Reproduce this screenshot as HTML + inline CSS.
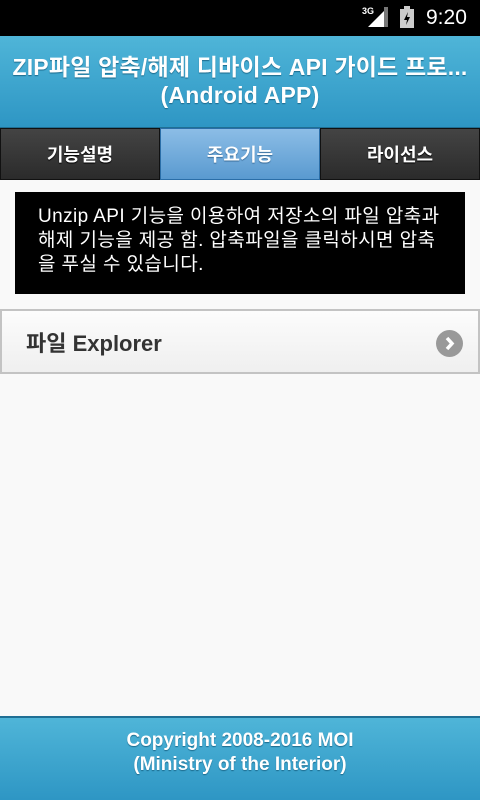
<!DOCTYPE html>
<html><head><meta charset="utf-8"><style>
*{margin:0;padding:0;box-sizing:border-box}
body{width:480px;height:800px;background:#f9f9f9;font-family:"Liberation Sans","Noto Sans CJK KR",sans-serif;position:relative;overflow:hidden}
.sb{height:36px;background:#000;color:#fff;position:relative}
.hd{position:absolute;top:36px;left:0;width:480px;height:92px;background:linear-gradient(#4fb5d8,#2e96c4);color:#fff;text-align:center;font-weight:bold;font-size:23px;line-height:28px;padding-top:17px;text-shadow:0 1px 1px #1c6a8c;border-bottom:1px solid #1f6f94;white-space:nowrap;letter-spacing:0.2px}
.tabs{position:absolute;top:128px;left:0;width:480px;height:52px;display:flex;background:#222}
.tab{flex:1;display:flex;align-items:center;justify-content:center;color:#fff;font-weight:bold;font-size:18px;background:linear-gradient(#444,#2b2b2b);border:1px solid #111;text-shadow:0 1px 1px #000}
.tab.a{background:linear-gradient(#8cbde6,#5a9ad0);color:#fff;border-color:#2a6ea8;text-shadow:0 1px 1px #3a6d99}
.desc{position:absolute;top:192px;left:15px;width:450px;height:102px;background:#000;color:#fff;font-size:19px;letter-spacing:0.4px;line-height:24px;padding:13px 0 0 23px;white-space:nowrap}
.item{position:absolute;top:309px;left:0;width:480px;height:65px;border:2px solid #c3c3c3;background:linear-gradient(#fcfcfc,#efefef);font-weight:bold;font-size:22px;color:#333;padding:15px 0 0 24px}
.arr{position:absolute;right:15px;top:19px;width:27px;height:27px;border-radius:50%;background:#999}
.ft{position:absolute;top:716px;left:0;width:480px;height:84px;background:linear-gradient(#4fb5d8,#2e96c4);border-top:2px solid #1f6f94;color:#fff;text-align:center;font-weight:bold;font-size:19px;line-height:24px;padding-top:11px;text-shadow:0 1px 1px #1c6a8c}
</style></head><body>
<div class="sb">
<span style="position:absolute;left:362px;top:6px;font-size:9px;font-weight:bold">3G</span>
<svg style="position:absolute;left:366px;top:7px" width="24" height="22"><polygon points="22,0 22,20 2,20" fill="#fff"/><rect x="18" y="0" width="4" height="20" fill="#777"/></svg>
<svg style="position:absolute;left:400px;top:6px" width="14" height="22"><rect x="4" y="0" width="6" height="3" fill="#ccc"/><rect x="0" y="3" width="14" height="19" fill="#ccc"/><path d="M8 6 L4 14 L7 14 L6 19 L10 11 L7 11Z" fill="#000"/></svg>
<span style="position:absolute;left:426px;top:6px;font-size:21px">9:20</span>
</div>
<div class="hd">ZIP파일 압축/해제 디바이스 API 가이드 프로...<br>(Android APP)</div>
<div class="tabs"><div class="tab">기능설명</div><div class="tab a">주요기능</div><div class="tab">라이선스</div></div>
<div class="desc">Unzip API 기능을 이용하여 저장소의 파일 압축과<br>해제 기능을 제공 함. 압축파일을 클릭하시면 압축<br>을 푸실 수 있습니다.</div>
<div class="item">파일 Explorer<div class="arr"><svg width="27" height="27"><path d="M11 8 L16 13.5 L11 19" stroke="#fff" stroke-width="3.5" fill="none"/></svg></div></div>
<div class="ft">Copyright 2008-2016 MOI<br>(Ministry of the Interior)</div>
</body></html>
